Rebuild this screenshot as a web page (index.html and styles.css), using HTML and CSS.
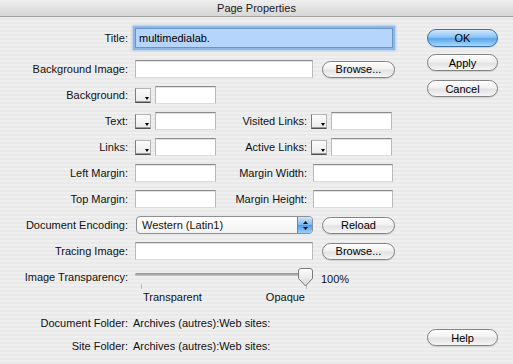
FILE: index.html
```html
<!DOCTYPE html>
<html lang="en">
<head>
    <meta charset="UTF-8">
    <meta name="viewport" content="width=device-width, initial-scale=1.0">
    <title>Page Properties</title>
    <link rel="stylesheet" href="styles.css">
</head>
<body>
    <div class="titlebar">Page Properties</div>

    <div class="dialog">
        <div class="form">
            <div class="row row-title">
                <span class="lbl">Title:</span>
                <input type="text" class="field field-title" value="multimedialab.">
            </div>

            <div class="row row-first">
                <span class="lbl">Background Image:</span>
                <input type="text" class="field field-wide">
                <button class="btn btn-browse">Browse...</button>
            </div>

            <div class="row">
                <span class="lbl">Background:</span>
                <span class="swatch"></span>
                <input type="text" class="field field-color">
            </div>

            <div class="row">
                <span class="lbl">Text:</span>
                <span class="swatch"></span>
                <input type="text" class="field field-color">
                <span class="lbl2">Visited Links:</span>
                <span class="swatch"></span>
                <input type="text" class="field field-color">
            </div>

            <div class="row">
                <span class="lbl">Links:</span>
                <span class="swatch"></span>
                <input type="text" class="field field-color">
                <span class="lbl2">Active Links:</span>
                <span class="swatch"></span>
                <input type="text" class="field field-color">
            </div>

            <div class="row">
                <span class="lbl">Left Margin:</span>
                <input type="text" class="field field-margin">
                <span class="lbl2 lbl2-margin">Margin Width:</span>
                <input type="text" class="field field-margin">
            </div>

            <div class="row">
                <span class="lbl">Top Margin:</span>
                <input type="text" class="field field-margin">
                <span class="lbl2 lbl2-margin">Margin Height:</span>
                <input type="text" class="field field-margin">
            </div>

            <div class="row">
                <span class="lbl">Document Encoding:</span>
                <div class="select">
                    <span>Western (Latin1)</span>
                    <span class="stepper">
                        <svg width="7" height="11" viewBox="0 0 7 11">
                            <path d="M3.5 1 L6 4 H1 Z" fill="#111"/>
                            <path d="M3.5 10 L6 7 H1 Z" fill="#111"/>
                        </svg>
                    </span>
                </div>
                <button class="btn btn-browse">Reload</button>
            </div>

            <div class="row">
                <span class="lbl">Tracing Image:</span>
                <input type="text" class="field field-wide">
                <button class="btn btn-browse">Browse...</button>
            </div>

            <div class="row row-slider">
                <span class="lbl">Image Transparency:</span>
                <div class="slider">
                    <span class="track"></span>
                    <span class="tick tick-start"></span>
                    <span class="tick tick-end"></span>
                    <svg class="thumb" width="15" height="19" viewBox="0 0 15 19">
                        <defs>
                            <linearGradient id="thumbFill" x1="0" y1="0" x2="0" y2="1">
                                <stop offset="0" stop-color="#ffffff"/>
                                <stop offset="1" stop-color="#d6d6d6"/>
                            </linearGradient>
                        </defs>
                        <path d="M3 0.5 H12 Q14.5 0.5 14.5 3 V10.5 L7.5 18 L0.5 10.5 V3 Q0.5 0.5 3 0.5 Z"
                              fill="url(#thumbFill)" stroke="#7a7a7a"/>
                    </svg>
                </div>
                <span class="percent">100%</span>
            </div>

            <div class="scale">
                <span>Transparent</span>
                <span>Opaque</span>
            </div>

            <div class="row row-info row-info-first">
                <span class="lbl lbl-info">Document Folder:</span>
                <span>Archives (autres):Web sites:</span>
            </div>
            <div class="row row-info">
                <span class="lbl lbl-info">Site Folder:</span>
                <span>Archives (autres):Web sites:</span>
            </div>
        </div>

        <div class="actions">
            <button class="btn btn-default">OK</button>
            <button class="btn btn-apply">Apply</button>
            <button class="btn btn-cancel">Cancel</button>
            <button class="btn btn-help">Help</button>
        </div>
    </div>
</body>
</html>
```

FILE: styles.css
```css
body {
    margin: 0;
    width: 513px;
    height: 364px;
    overflow: hidden;
    font-family: "Liberation Sans", Arial, sans-serif;
    font-size: 11px;
    color: #111;
    background: repeating-linear-gradient(180deg, #efefef 0, #efefef 2px, #e9e9e9 2px, #e9e9e9 4px);
}

.titlebar {
    height: 16px;
    line-height: 16px;
    text-align: center;
    color: #1a1a1a;
    background: linear-gradient(#efefef, #d6d6d6);
    border-bottom: 1px solid #a2a2a2;
}

.dialog {
    display: flex;
    height: 347px;
}

.form {
    width: 427px;
    padding-top: 8px;
}

.row {
    display: flex;
    align-items: center;
    height: 26px;
}
.row-first {
    margin-top: 5px;
}

.lbl {
    width: 128px;
    text-align: right;
    margin-right: 7px;
    white-space: nowrap;
}
.lbl2 {
    width: 91px;
    text-align: right;
    margin-right: 4px;
    white-space: nowrap;
}
.lbl2-margin {
    margin-right: 6px;
}

/* text fields */
.field {
    box-sizing: border-box;
    height: 18px;
    margin: 0;
    padding: 0 3px;
    font: inherit;
    background: #fff;
    border: 1px solid #b9b9b9;
    border-top-color: #8c8c8c;
    border-bottom-color: #dcdcdc;
    box-shadow: inset 0 1px 0 #e2e2e2;
    outline: none;
}
.field-title {
    width: 258px;
    height: 20px;
    background: #b5d5fd;
    border-color: #6d94c4;
    box-shadow: 0 0 0 2px #8fb8ea, 0 0 2px 3px rgba(120, 165, 225, 0.45);
}
.field-wide {
    width: 178px;
}
.field-color {
    width: 61px;
}
.field-margin {
    width: 81px;
}
.field-margin + .lbl2 + .field-margin {
    width: 80px;
}

/* colour swatch button */
.swatch {
    position: relative;
    box-sizing: border-box;
    width: 16px;
    height: 15px;
    margin-right: 4px;
    background: linear-gradient(#fbfbfb, #ebebeb);
    border: 1px solid #b4b4b4;
    border-left-color: #7c7c7c;
    border-bottom: 1px solid #4f4f4f;
    box-shadow: inset 0 -1px 0 #9a9a9a;
}
.swatch::after {
    content: "";
    position: absolute;
    right: 1px;
    bottom: 2px;
    border-left: 2px solid transparent;
    border-right: 2px solid transparent;
    border-top: 3px solid #000;
}

/* aqua buttons */
.btn {
    box-sizing: border-box;
    width: 71px;
    height: 17px;
    padding: 0;
    font: inherit;
    color: #000;
    border: 1px solid #838383;
    border-radius: 9px;
    background: linear-gradient(#fefefe, #f1f1f1 45%, #e2e2e2 55%, #f6f6f6);
    box-shadow: 0 1px 1px rgba(0, 0, 0, 0.12);
}
.btn-browse {
    width: 73px;
    margin-left: 9px;
}
.btn-default {
    height: 18px;
    border-color: #3c6fae;
    background: linear-gradient(#cfe8fd, #8cc4f5 45%, #5aa6ec 55%, #a8dafc);
}

.actions {
    display: flex;
    flex-direction: column;
    width: 71px;
    padding-top: 12px;
    padding-bottom: 18px;
    box-sizing: border-box;
}
.btn-apply {
    margin-top: 7px;
}
.btn-cancel {
    margin-top: 9px;
}
.btn-help {
    margin-top: auto;
}

/* popup menu */
.select {
    box-sizing: border-box;
    display: flex;
    align-items: center;
    width: 177px;
    height: 18px;
    margin-left: 1px;
    padding-left: 5px;
    border: 1px solid #8f8f8f;
    border-radius: 4px;
    background: linear-gradient(#ffffff, #f2f2f2);
    overflow: hidden;
}
.select span:first-child {
    flex: 1;
}
.stepper {
    display: flex;
    align-items: center;
    justify-content: center;
    width: 14px;
    height: 100%;
    background: linear-gradient(#cde6fc, #79b7f0 50%, #4f9be6 52%, #9bd0fa);
    border-left: 1px solid #5c88bd;
}

/* slider */
.slider {
    position: relative;
    width: 178px;
    height: 26px;
}
.track {
    position: absolute;
    left: 0;
    right: 4px;
    top: 9px;
    height: 3px;
    border-radius: 2px;
    background: linear-gradient(#8d8d8d, #c9c9c9);
}
.tick {
    position: absolute;
    top: 20px;
    width: 1px;
    height: 5px;
    background: #bcbcbc;
}
.tick-start {
    left: 6px;
}
.tick-end {
    left: 171px;
}
.thumb {
    position: absolute;
    left: 163px;
    top: 4px;
}
.percent {
    margin-left: 8px;
    margin-top: 4px;
}

.scale {
    display: flex;
    justify-content: space-between;
    width: 162px;
    height: 14px;
    line-height: 14px;
    margin-left: 143px;
}

.row-info {
    height: 23px;
}
.row-info-first {
    margin-top: 7px;
}
.lbl-info {
    margin-right: 5px;
}
```
